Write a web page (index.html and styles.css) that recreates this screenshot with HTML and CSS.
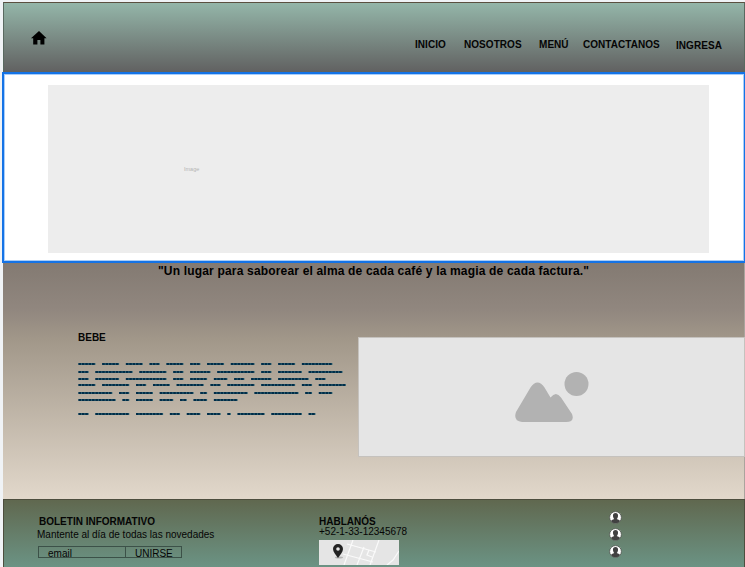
FILE: index.html
```html
<!DOCTYPE html>
<html lang="es">
<head>
<meta charset="utf-8">
<title>Cafetería</title>
<link rel="stylesheet" href="styles.css">
</head>
<body>
<div class="page">
  <header class="header">
    <svg class="home" width="16" height="14" viewBox="0 0 16 14"><path d="M8 0 0 7.2H2.2V13.6H6.4V9H9.4V13.6H13.4V7.2H15.6Z"/></svg>
    <nav class="nav">
      <a class="inicio">INICIO</a>
      <a class="nosotros">NOSOTROS</a>
      <a class="menu">MENÚ</a>
      <a class="contactanos">CONTACTANOS</a>
      <a class="ingresa">INGRESA</a>
    </nav>
  </header>
  <section class="hero"><div class="hero-image"><span>Image</span></div></section>
  <main class="main">
    <h1 class="quote"><svg width="432" height="18"><text x="0" y="12" textLength="431">"Un lugar para saborear el alma de cada café y la magia de cada factura."</text></svg></h1>
    <div class="content">
      <div class="article">
        <h2>BEBE</h2>
        <svg class="copy" width="270" height="56" viewBox="0 0 270 56">
          <defs>
            <g id="lines" transform="translate(.5 0) scale(3.385 1)">
              <path d="M0 2h5m2 0h5m2 0h5m2 0h3m2 0h5m2 0h3m2 0h5m2 0h7m2 0h3m2 0h5m2 0h9"/>
              <path d="M0 10h3m2 0h11m2 0h8m2 0h3m2 0h6m2 0h11m2 0h3m2 0h7m2 0h10"/>
              <path d="M0 17h3m2 0h7m2 0h12m2 0h3m2 0h5m2 0h4m2 0h3m2 0h6m2 0h9m2 0h3"/>
              <path d="M0 23h5m2 0h8m2 0h3m2 0h5m2 0h8m2 0h3m2 0h8m2 0h10m2 0h3m2 0h8"/>
              <path d="M0 31h10m2 0h3m2 0h5m2 0h10m2 0h2m2 0h10m2 0h13m2 0h2m2 0h4"/>
              <path d="M0 38h11m2 0h2m2 0h5m2 0h4m2 0h2m2 0h4m2 0h7"/>
              <path d="M0 52h3m2 0h10m2 0h8m2 0h3m2 0h4m2 0h4m2 0h1m2 0h8m2 0h9m2 0h2"/>
            </g>
          </defs>
          <use href="#lines" class="words"/>
          <use href="#lines" class="marks"/>
        </svg>
      </div>
      <div class="picture">
        <svg width="75" height="52" viewBox="0 0 75 52"><circle cx="61.5" cy="12" r="12"/><path d="M1 40 15.5 15.5Q22.5 5.5 29.5 15.5L35.5 25.5Q41 18.5 46 25.5L57 42Q60 50 51 50H7Q-2 49 1 40Z"/></svg>
      </div>
    </div>
  </main>
  <footer class="footer">
    <div class="newsletter">
      <h3>BOLETIN INFORMATIVO</h3>
      <p>Mantente al día de todas las novedades</p>
      <div class="form"><div class="email">email</div><div class="join">UNIRSE</div></div>
    </div>
    <div class="contact">
      <h3>HABLANÓS</h3>
      <p>+52-1-33-12345678</p>
      <svg class="map" width="80" height="25" viewBox="0 0 80 25">
        <rect width="80" height="25" fill="#e5e5e5"/>
        <path d="M34 0 25 25M60 0 51 25M45 7 38 25M28 4 57 12M24 14 54 22M50 10 48 15 53 17M80 11 74 20 68 25" fill="none" stroke="#fafafa" stroke-width="1.2"/>
        <ellipse cx="20" cy="17.5" rx="4" ry="1" fill="#b5b5b5"/>
        <path d="M19 4a5 5 0 0 1 5 5c0 3-3 6-5 9-2-3-5-6-5-9a5 5 0 0 1 5-5Z" fill="#222"/><circle cx="19" cy="9" r="1.8" fill="#e5e5e5"/>
      </svg>
    </div>
    <div class="social">
      <svg viewBox="0 0 13 13"><use href="#person"/></svg>
      <svg viewBox="0 0 13 13"><use href="#person"/></svg>
      <svg viewBox="0 0 13 13"><use href="#person"/></svg>
    </div>
  </footer>
</div>
<svg width="0" height="0" class="symbols"><defs><g id="person"><circle cx="6.5" cy="6.5" r="5.9" fill="#fff" stroke="#4b504b" stroke-width=".8"/><path d="M6.5 2C8.5 2 9.2 3.4 9 5.2 8.8 6.8 8 7.8 7.7 8.1L10.7 9.2 10.5 10.7Q6.5 13.8 2.5 10.7L2.3 9.2 5.3 8.1C5 7.8 4.2 6.8 4 5.2 3.8 3.4 4.5 2 6.5 2Z" fill="#414141"/></g></defs></svg>
</body>
</html>
```
FILE: styles.css
```css
* { box-sizing: border-box; }
html, body { margin: 0; height: 567px; overflow: hidden; }
body { background: #f0f3f6; font-family: "Liberation Sans", Arial, sans-serif; color: #050505; }
h1, h2, h3, p { margin: 0; }
.symbols { display: none; }
.page { height: 567px; padding: 2px 0 0 2px; display: flex; flex-direction: column; }
.header {
  height: 70px; margin-left: 1px; flex: none; display: flex; justify-content: space-between;
  background: linear-gradient(#94b6a9, #616161);
  border: 1px solid #5b5040; border-bottom: 0; border-left-color: #596960; border-right-color: #596960;
}
.home { margin: 28px 0 0 27px; }
.nav { display: flex; padding: 36px 0 0; font-size: 10px; font-weight: bold; line-height: 12px; letter-spacing: .05px; white-space: nowrap; }
.inicio { width: 49px; }
.nosotros { width: 75px; }
.menu { width: 44px; }
.contactanos { width: 93px; }
.ingresa { width: 68px; padding-top: 1px; }
.hero { height: 191px; flex: none; background: #fff; border: 2px solid #1473e6; border-right-width: 1px; box-shadow: inset 0 0 0 1px #a9cdf8; padding: 11px 35px 8px 44px; }
.hero-image { height: 168px; background: #ededed; padding: 80px 0 0 136px; color: #b4b4b4; font-size: 5.5px; line-height: 8px; }
.hero-image span { display: block; }
.main { height: 236px; flex: none; margin-left: 1px; background: linear-gradient(#837a72, #91877f 20%, #a19789 32%, #e2d8cb); border-right: 1px solid #aaa49d; }
.quote { height: 74px; padding-left: 155px; font-size: 12px; line-height: 0; }
.content { display: flex; justify-content: space-between; }
.article { padding-left: 75px; }
.article h2 { font-size: 10px; line-height: 12px; margin-top: -5px; }
.copy { display: block; margin-top: 18px; }
.copy path { fill: none; stroke-width: 2px; }
.words { stroke: #2f6573; }
.marks { stroke: #002c48; stroke-dasharray: .75 .25; }
.picture { width: 387px; height: 120px; margin-right: -1px; background: #e5e5e5; border: 1px solid #c5c2be; padding: 34px 0 0 156px; fill: #b2b2b2; }
.footer { height: 68px; flex: none; margin-left: 1px; display: flex; border: 1px solid #4d4e3e; border-bottom: 0; background: linear-gradient(#60684f, #6b9384); }
.newsletter { width: 315px; padding: 16px 0 0 33px; }
.footer h3 { font-size: 10px; line-height: 12px; }
.newsletter h3 { padding-left: 2px; }
.newsletter p { font-size: 10px; line-height: 12px; margin-top: 1px; }
.form { display: flex; width: 144px; height: 12px; margin: 5px 0 0 1px; border: 1px solid #3c5148; font-size: 10px; line-height: 13px; }
.email { width: 87px; padding-left: 9px; border-right: 1px solid #3c5148; }
.join { padding-left: 9px; }
.contact { width: 290px; padding-top: 16px; }
.contact p { font-size: 10px; line-height: 11px; margin-top: -2px; }
.map { display: block; margin-top: 3px; }
.social { padding-top: 11px; display: flex; flex-direction: column; gap: 4px; }
.social svg { width: 13px; height: 13px; }
```
